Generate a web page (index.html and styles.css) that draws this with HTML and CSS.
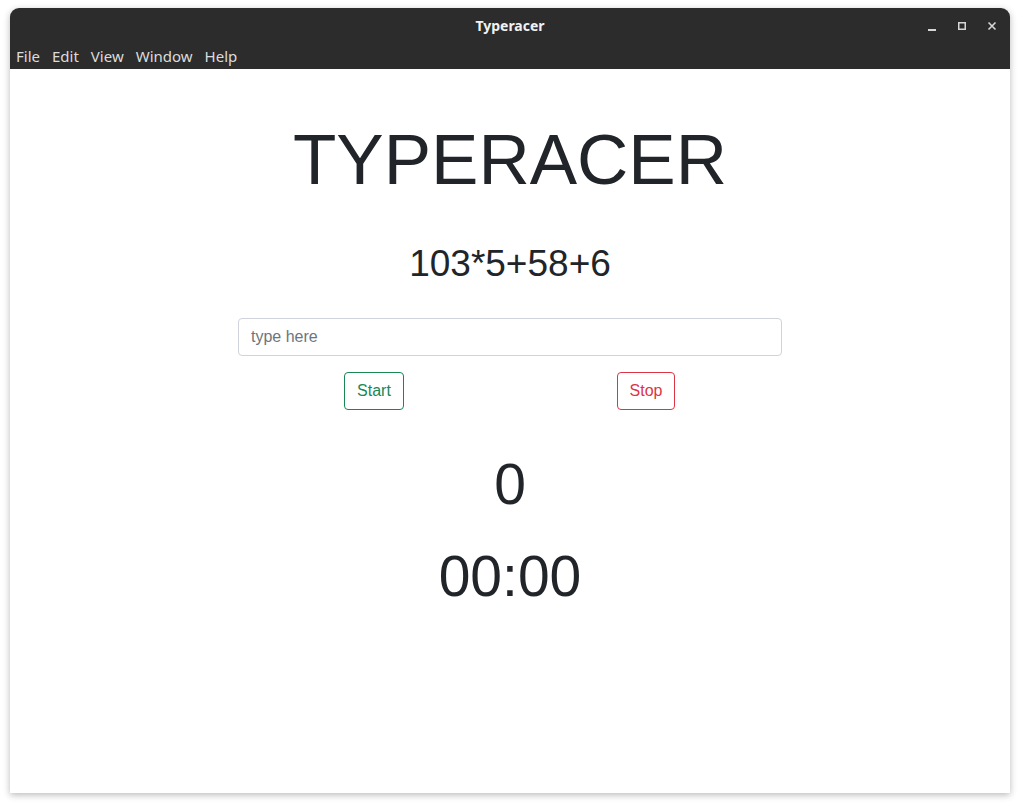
FILE: index.html
```html
<!DOCTYPE html>
<html>
<head>
<meta charset="utf-8">
<title>Typeracer</title>
<link rel="stylesheet" href="styles.css">
</head>
<body>
<div class="window">
  <div class="titlebar">
    <div class="title-row">
      <span class="title">Typeracer</span>
      <div class="controls">
        <svg class="ctl" width="12" height="12" viewBox="0 0 12 12"><rect x="2" y="9" width="8" height="2" fill="#d6d6d6"/></svg>
        <svg class="ctl" width="12" height="12" viewBox="0 0 12 12"><rect x="2.75" y="2.75" width="6.5" height="6.5" fill="none" stroke="#d6d6d6" stroke-width="1.5"/></svg>
        <svg class="ctl" width="12" height="12" viewBox="0 0 12 12"><path d="M2.5 2.5 L9.5 9.5 M9.5 2.5 L2.5 9.5" stroke="#d6d6d6" stroke-width="1.6"/></svg>
      </div>
    </div>
    <nav class="menu">
      <span>File</span><span>Edit</span><span>View</span><span>Window</span><span>Help</span>
    </nav>
  </div>
  <main class="content">
    <h1 class="display">TYPERACER</h1>
    <h1 class="problem">103*5+58+6</h1>
    <div class="form">
      <input class="form-control" type="text" placeholder="type here">
      <div class="btn-row">
        <div class="btn-cell"><button class="btn btn-success">Start</button></div>
        <div class="btn-cell"><button class="btn btn-danger">Stop</button></div>
      </div>
    </div>
    <div class="big score">0</div>
    <div class="big timer">00:00</div>
  </main>
</div>
</body>
</html>
```

FILE: styles.css
```css
html, body {
  margin: 0;
  padding: 0;
  background: #ffffff;
}
body {
  width: 1020px;
  height: 805px;
  overflow: hidden;
}
.window {
  margin: 8px 10px 0 10px;
  width: 1000px;
  height: 785px;
  border-radius: 9px 9px 0 0;
  background: #ffffff;
  box-shadow: 0 2px 7px rgba(0, 0, 0, 0.28);
  display: flex;
  flex-direction: column;
  overflow: hidden;
}
.titlebar {
  background: #2c2c2c;
  height: 61px;
  font-family: "Noto Sans", "DejaVu Sans", sans-serif;
  display: flex;
  flex-direction: column;
}
.title-row {
  height: 36px;
  display: flex;
  align-items: center;
  justify-content: center;
  position: relative;
}
.title {
  color: #f2f2f2;
  font-weight: 700;
  font-size: 14px;
  margin-top: -1px;
}
.controls {
  position: absolute;
  right: 12px;
  top: 12px;
  display: flex;
  gap: 18px;
}
.ctl {
  display: block;
}
.menu {
  display: flex;
  gap: 12px;
  padding-left: 6px;
  color: #dcdcdc;
  font-size: 15px;
  height: 25px;
  align-items: center;
  margin-top: -1px;
}
.content {
  flex: 1;
  display: flex;
  flex-direction: column;
  align-items: center;
  font-family: "Liberation Sans", Arial, sans-serif;
  color: #212529;
}
h1 {
  margin: 0;
  font-weight: 500;
  line-height: 1.2;
}
.display {
  font-size: 71px;
  font-weight: 300;
  margin-top: 48px;
}
.problem {
  font-size: 37px;
  margin-top: 40px;
}
.form {
  width: 544px;
  margin-top: 31px;
  display: flex;
  flex-direction: column;
  gap: 16px;
}
.form-control {
  box-sizing: border-box;
  width: 100%;
  height: 38px;
  padding: 6px 12px;
  font-family: "Liberation Sans", Arial, sans-serif;
  font-size: 16px;
  color: #212529;
  border: 1px solid #ced4da;
  border-radius: 4px;
  outline: none;
  background: #fff;
}
.form-control::placeholder {
  color: #6c757d;
}
.btn-row {
  display: flex;
}
.btn-cell {
  flex: 1;
  display: flex;
  justify-content: center;
}
.btn {
  font-family: "Liberation Sans", Arial, sans-serif;
  font-size: 16px;
  line-height: 24px;
  padding: 6px 12px;
  border-radius: 4px;
  background: transparent;
  border: 1px solid;
}
.btn-success {
  color: #198754;
  border-color: #198754;
}
.btn-danger {
  color: #dc3545;
  border-color: #dc3545;
}
.big {
  font-size: 57px;
  line-height: 1.2;
}
.score {
  margin-top: 40px;
}
.timer {
  margin-top: 24px;
}
```
